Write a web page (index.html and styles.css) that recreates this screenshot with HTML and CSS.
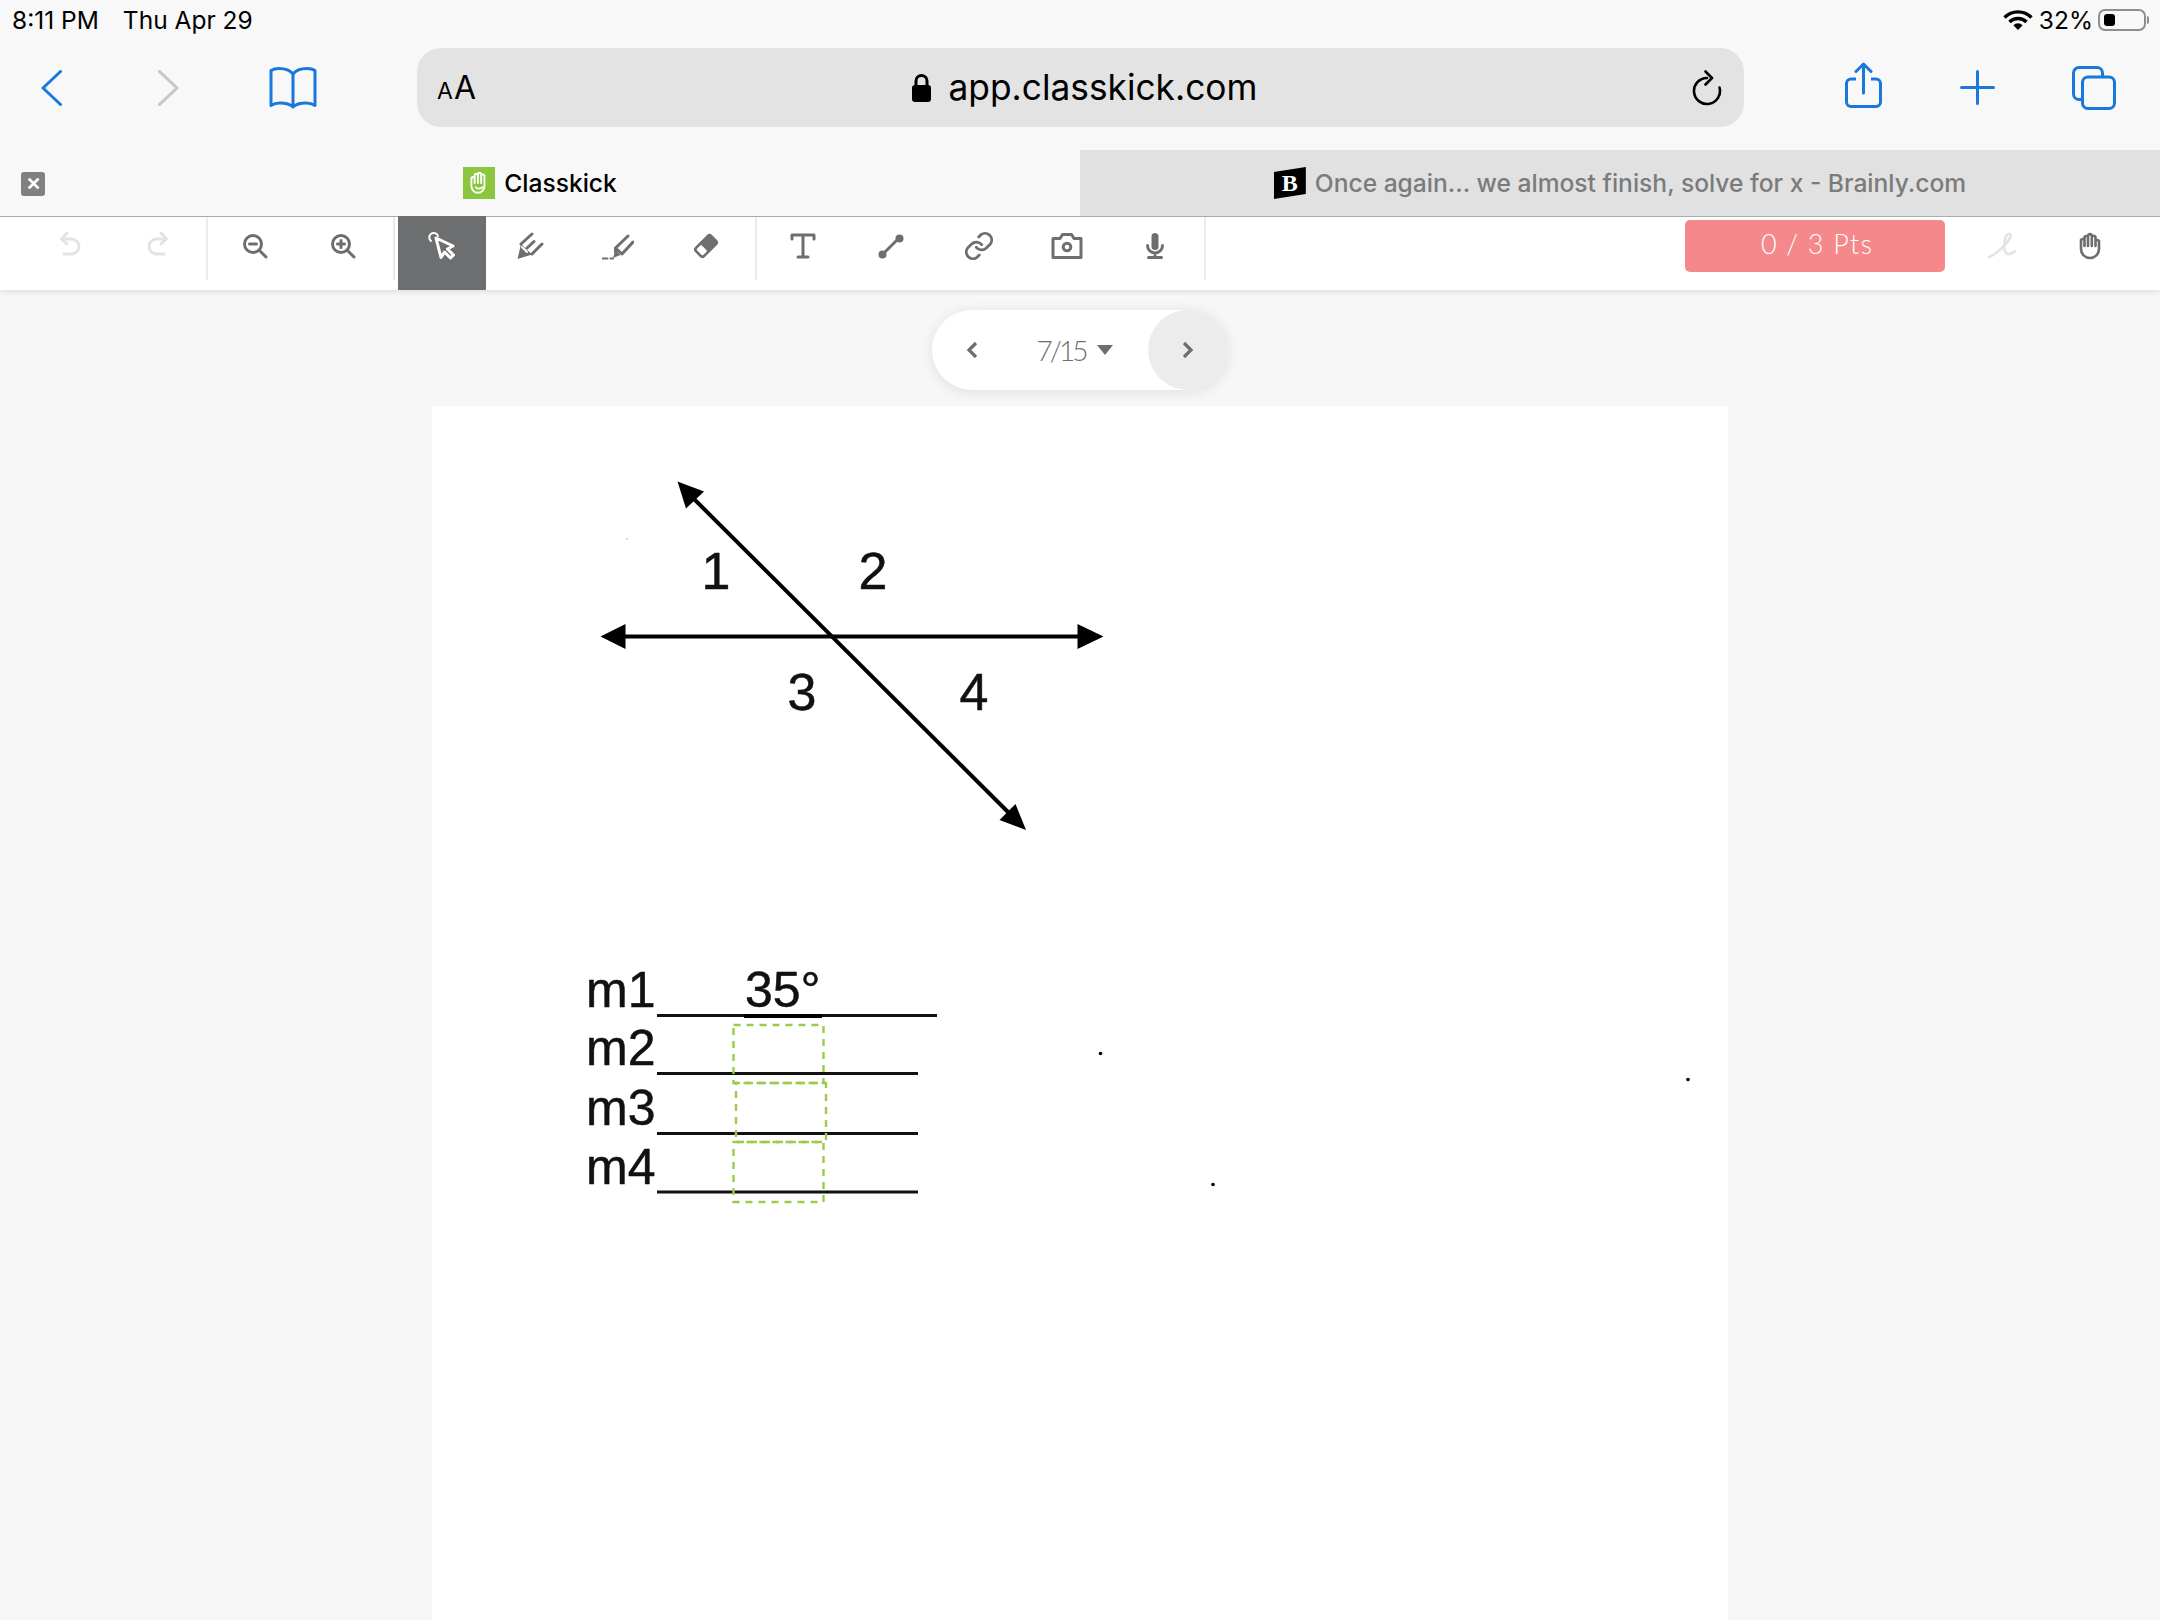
FILE: index.html
```html
<!DOCTYPE html>
<html lang="en">
<head>
    <meta charset="UTF-8">
    <meta name="viewport" content="width=device-width, initial-scale=1.0">
    <title>Classkick</title>
    <link rel="stylesheet" href="styles.css">
</head>
<body>
    <!-- iPad status bar -->
    <div class="status">
        <div class="status-left"><span>8:11 PM</span><span>Thu Apr 29</span></div>
        <div class="status-right">
            <svg width="30" height="20" viewBox="0 0 30 20" class="wifi">
                <path d="M1.500 7.500a19 19 0 0 1 27 0" fill="none" stroke="#000" stroke-width="3.400"/>
                <path d="M6.500 12a12 12 0 0 1 17 0" fill="none" stroke="#000" stroke-width="3.400"/>
                <path d="M15 20l-4.600-4.800a6.600 6.600 0 0 1 9.200 0z" fill="#000"/>
            </svg>
            <span class="battery-text">32%</span>
            <div class="battery"><div class="battery-fill"></div></div>
            <div class="battery-nub"></div>
        </div>
    </div>

    <!-- Safari address bar -->
    <div class="addressbar">
        <svg class="ab-back" width="21" height="36" viewBox="0 0 21 36"><path d="M19.500 1.500L2 18l17.500 16.500" fill="none" stroke="#1878dc" stroke-width="3" stroke-linecap="round" stroke-linejoin="round"/></svg>
        <svg class="ab-forward" width="21" height="36" viewBox="0 0 21 36"><path d="M1.500 1.500L19 18 1.500 34.500" fill="none" stroke="#c6c6c6" stroke-width="3" stroke-linecap="round" stroke-linejoin="round"/></svg>
        <svg class="ab-book" width="48" height="42" viewBox="0 0 48 42"><path d="M24 7C21 3 16 1.500 10 1.500 6 1.500 3.500 2.500 2 3.500V38.500C5 36.500 8 36 11 36c5 0 10 1 13 4 3-3 8-4 13-4 3 0 6 .5 9 2.500V3.500C44.500 2.500 42 1.500 38 1.500 32 1.500 27 3 24 7zM24 7V40" fill="none" stroke="#1878dc" stroke-width="3" stroke-linejoin="round"/></svg>

        <div class="urlbar">
            <div class="aa"><span class="aa-small">A</span><span class="aa-big">A</span></div>
            <div class="url">
                <svg width="21" height="29" viewBox="0 0 21 29"><path d="M5 13V8a5.500 5.500 0 0 1 11 0v5" fill="none" stroke="#000" stroke-width="3"/><rect x="1" y="12" width="19" height="17" rx="3" fill="#000"/></svg>
                <span>app.classkick.com</span>
            </div>
            <svg width="30" height="36" viewBox="0 0 30 36"><path d="M15 8A13 13 0 1 0 27.500 17.500" fill="none" stroke="#000" stroke-width="2.600" stroke-linecap="round"/><path d="M13.500 1.500L20 8 13.500 14.500" fill="none" stroke="#000" stroke-width="2.600" stroke-linecap="round" stroke-linejoin="round"/></svg>
        </div>

        <svg class="ab-share" width="37" height="46" viewBox="0 0 37 46"><path d="M11 17H6a4.500 4.500 0 0 0-4.500 4.500V40A4.500 4.500 0 0 0 6 44.500H31a4.500 4.500 0 0 0 4.500-4.500V21.500A4.500 4.500 0 0 0 31 17H26" fill="none" stroke="#1878dc" stroke-width="3"/><path d="M18.500 31V2M11 9.500L18.500 2 26 9.500" fill="none" stroke="#1878dc" stroke-width="3" stroke-linecap="round" stroke-linejoin="round"/></svg>
        <svg class="ab-plus" width="35" height="35" viewBox="0 0 35 35"><path d="M17.500 1.500V33.500M1.500 17.500H33.500" fill="none" stroke="#1878dc" stroke-width="3" stroke-linecap="round"/></svg>
        <svg class="ab-tabs" width="44" height="44" viewBox="0 0 44 44"><path d="M9 33.500H7A5.500 5.500 0 0 1 1.500 28V7A5.500 5.500 0 0 1 7 1.500H25A5.500 5.500 0 0 1 30.500 7V11" fill="none" stroke="#1878dc" stroke-width="3"/><rect x="10.500" y="11" width="32" height="31.500" rx="5.500" fill="none" stroke="#1878dc" stroke-width="3"/></svg>
    </div>

    <!-- Safari tabs -->
    <div class="tabs">
        <div class="tab">
            <div class="tab-close">&#10005;</div>
            <div class="favicon">
                <svg width="26" height="26" viewBox="0 0 24 24"><path d="M5 14V8a1.500 1.500 0 0 1 3 0V5a1.500 1.500 0 0 1 3 0V4a1.500 1.500 0 0 1 3 0V5.500a1.500 1.500 0 0 1 3 0V15a6 6 0 0 1-12 0zM8 8v4M11 5v7M14 4v8M9 16c1.500 1.500 4.500 1.500 6 0" fill="none" stroke="#fff" stroke-width="1.700" stroke-linecap="round"/></svg>
            </div>
            <span class="tab-title">Classkick</span>
        </div>
        <div class="tab tab-inactive">
            <div class="brainly"><span>B</span></div>
            <span class="tab-title">Once again... we almost finish, solve for x - Brainly.com</span>
        </div>
    </div>

    <!-- Classkick toolbar -->
    <div class="toolbar">
        <div class="tool tool-off"><svg width="32" height="32" viewBox="0 0 32 32"><path d="M13 3L7.500 9 13 14M8 9H17.500a7.500 7.500 0 0 1 0 15H10" class="ln"/></svg></div>
        <div class="tool tool-off"><svg width="32" height="32" viewBox="0 0 32 32"><path d="M19 3L24.500 9 19 14M24 9H14.500a7.500 7.500 0 0 0 0 15H22" class="ln"/></svg></div>
        <div class="divider divider-a"></div>
        <div class="tool"><svg width="32" height="32" viewBox="0 0 32 32"><circle cx="14" cy="14" r="8.500" class="ln"/><path d="M20.500 20.500L27 27" class="ln"/><path d="M10.500 14H17.500" class="ln"/></svg></div>
        <div class="tool"><svg width="32" height="32" viewBox="0 0 32 32"><circle cx="14" cy="14" r="8.500" class="ln"/><path d="M20.500 20.500L27 27" class="ln"/><path d="M10.500 14H17.500M14 10.500V17.500" class="ln"/></svg></div>
        <div class="divider divider-b"></div>
        <div class="tool tool-active"><svg width="32" height="32" viewBox="0 0 32 32"><path d="M10 9L27 17 21.500 20 27.500 26 24.500 29 18.500 23 15 28.500z" class="ln"/><path d="M5 12a4.500 4.500 0 1 1 7-5" class="ln-thin"/></svg></div>
        <div class="tool"><svg width="32" height="32" viewBox="0 0 32 32"><path d="M3.500 29L7 14 18 24.500z" class="fl"/><path d="M7 14L18 4M18 24L28 14M13 18L20 11.500" class="ln"/><path d="M8 17L13 22" class="ln-white"/></svg></div>
        <div class="tool"><svg width="32" height="32" viewBox="0 0 32 32"><path d="M0 28.500H5.500M8.500 28.500H11" class="ln-thin"/><path d="M11 28L13.500 20 18.500 25z" class="fl"/><path d="M13.500 18L26 6M20 24L31 12M13.500 18L13.500 22M13.500 18L20 24" class="ln"/></svg></div>
        <div class="tool"><svg width="32" height="32" viewBox="0 0 32 32"><g transform="rotate(-45 16 16)"><rect x="4" y="9" width="24" height="14" rx="3.500" class="fl"/><rect x="6.500" y="11.500" width="7" height="9" rx="1.500" fill="#fff"/></g></svg></div>
        <div class="divider divider-c"></div>
        <div class="tool"><svg width="32" height="32" viewBox="0 0 32 32"><path d="M5 9V5H27V9M16 5V27M11 27H21" class="ln"/></svg></div>
        <div class="tool"><svg width="32" height="32" viewBox="0 0 32 32"><path d="M8 24L24 8" class="ln"/><circle cx="24.500" cy="8.500" r="4" class="fl"/><circle cx="7.500" cy="24.500" r="4" class="fl"/></svg></div>
        <div class="tool"><svg width="32" height="32" viewBox="0 0 24 24"><path d="M10 13a5 5 0 0 0 7.500.5l3-3a5 5 0 0 0-7-7l-1.700 1.700M14 11a5 5 0 0 0-7.500-.5l-3 3a5 5 0 0 0 7 7l1.700-1.700" fill="none" stroke="#6d6e70" stroke-width="2.100" stroke-linecap="round"/></svg></div>
        <div class="tool"><svg width="32" height="32" viewBox="0 0 32 32"><path d="M2 8.500H9L11.500 4.500H20.500L23 8.500H30V27.500H2z" class="ln"/><circle cx="16" cy="17" r="3.800" class="ln"/></svg></div>
        <div class="tool"><svg width="32" height="32" viewBox="0 0 32 32"><rect x="12.500" y="3" width="7" height="17" rx="3.500" class="fl"/><path d="M8.500 15.500a7.500 7.500 0 0 0 15 0M16 23V27M9.500 27.500H22.500" class="ln"/></svg></div>
        <div class="divider divider-d"></div>

        <div class="toolbar-right">
            <div class="points">0 / 3 Pts</div>
            <div class="tool tool-off"><svg width="32" height="32" viewBox="0 0 32 32"><path d="M3 27C9 25 20 15 24 8 26 4 22 2 20 6 18 11 17 19 20 23 21 25 26 24 29 21" fill="none" stroke="#e3e3e3" stroke-width="2.600" stroke-linecap="round"/></svg></div>
            <div class="tool"><svg width="32" height="32" viewBox="0 0 32 32"><path d="M7 18V10a2 2 0 0 1 3.500 0V7a2 2 0 0 1 3.500 0V5.500a2 2 0 0 1 3.800 0V7a2 2 0 0 1 3.700 0V11a2 2 0 0 1 3.500 0V19a9 9 0 0 1-18 0zM10.500 9.500V16M14 7V16M17.800 6V16M21.500 7V16" class="ln-mid"/></svg></div>
        </div>
    </div>

    <main class="workspace">
        <div class="pager">
            <div class="pager-btn"><svg width="14" height="20" viewBox="0 0 14 20"><path d="M11 3L4 10l7 7" fill="none" stroke="#6d6e70" stroke-width="3.200"/></svg></div>
            <div class="pager-count"><span class="pager-text">7/15</span><i class="caret"></i></div>
            <div class="pager-btn pager-next"><svg width="14" height="20" viewBox="0 0 14 20"><path d="M3 3l7 7-7 7" fill="none" stroke="#6d6e70" stroke-width="3.200"/></svg></div>
        </div>

        <!-- the worksheet, coordinates are screen pixels -->
        <div class="sheet">
            <svg class="sheet-art" width="1296" height="1214" viewBox="432 406 1296 1214">
                <path d="M612 636.500H1090" class="art-line"/>
                <path d="M690 495L1012 816" class="art-line"/>
                <path d="M600.500 636.500L625.500 624V649z"/>
                <path d="M1103.500 636.500L1077.500 624V649z"/>
                <path d="M677.500 481.500L704 491.500 686 508.500z"/>
                <path d="M1026 830L1015.500 804 999.500 820z"/>
                <text x="716" y="589" class="art-num">1</text>
                <text x="873" y="589" class="art-num">2</text>
                <text x="802" y="710" class="art-num">3</text>
                <text x="974" y="710" class="art-num">4</text>

                <text x="586" y="1007" class="art-label">m1</text>
                <text x="586" y="1065" class="art-label">m2</text>
                <text x="586" y="1125" class="art-label">m3</text>
                <text x="586" y="1184" class="art-label">m4</text>
                <path d="M657 1015.500H937M657 1073.500H918M657 1133.500H918M657 1192H918" class="art-rule"/>

                <text x="745" y="1007" class="art-label art-answer">35°</text>
                <path d="M744 1016H822" class="art-rule art-thick"/>

                <rect x="733.500" y="1025" width="90" height="58" class="art-box"/>
                <rect x="736" y="1083" width="90" height="59" class="art-box art-box-mid"/>
                <rect x="733.500" y="1142" width="90" height="60" class="art-box"/>

                <circle cx="1100.500" cy="1053.500" r="1.800"/>
                <circle cx="1688" cy="1079.500" r="1.800"/>
                <circle cx="1213" cy="1184.500" r="1.800"/>
                <circle cx="627" cy="539" r="1" fill="#ccc"/>
            </svg>
        </div>
    </main>
</body>
</html>
```

FILE: styles.css
```css
body {
    margin: 0;
    height: 1620px;
    overflow: hidden;
    background: #f7f7f7;
    font-family: Inter, "Liberation Sans", sans-serif;
    color: #000;
}
svg {
    display: block;
}

/* status bar */
.status {
    display: flex;
    justify-content: space-between;
    align-items: center;
    height: 40px;
    padding: 0 11px 8px 12px;
    background: #f8f8f8;
    font-size: 24.5px;
}
.status-left {
    display: flex;
    gap: 24px;
}
.status-right {
    display: flex;
    align-items: center;
}
.wifi {
    margin-right: 6px;
}
.battery {
    width: 48px;
    height: 22px;
    box-sizing: border-box;
    margin-left: 5px;
    padding: 3px 4px;
    border: 2px solid #8e8e8e;
    border-radius: 7px;
}
.battery-fill {
    width: 11px;
    height: 100%;
    background: #000;
    border-radius: 3px;
}
.battery-nub {
    width: 2px;
    height: 8px;
    margin-left: 1px;
    background: #8e8e8e;
    border-radius: 0 2px 2px 0;
}

/* address bar */
.addressbar {
    display: flex;
    align-items: center;
    height: 79px;
    padding: 0 0 23px 41px;
    background: #f8f8f8;
}
.ab-forward { margin-left: 96px; }
.ab-book { margin-left: 90px; }
.ab-share { margin-left: 101px; margin-top: -6px; }
.ab-plus { margin-left: 78px; }
.ab-tabs { margin-left: 77px; }
.urlbar {
    display: flex;
    justify-content: space-between;
    align-items: center;
    width: 1327px;
    height: 79px;
    box-sizing: border-box;
    margin-left: 100px;
    padding: 0 22px 0 20px;
    background: #e3e3e3;
    border-radius: 24px;
}
.aa {
    display: flex;
    align-items: baseline;
    gap: 1px;
}
.aa-small { font-size: 23px; }
.aa-big { font-size: 32px; }
.url {
    display: flex;
    align-items: center;
    gap: 17px;
    font-size: 35.3px;
}

/* tabs */
.tabs {
    display: flex;
    height: 66px;
    background: #f8f8f8;
    border-bottom: 1px solid #aaa;
}
.tab {
    position: relative;
    flex: 1;
    display: flex;
    justify-content: center;
    align-items: center;
    gap: 9px;
    font-size: 24.6px;
    font-weight: 500;
}
.tab-inactive {
    background: #e1e1e1;
    color: #7b7b7b;
}
.tab-close {
    position: absolute;
    left: 21px;
    top: 22px;
    width: 24px;
    height: 24px;
    background: #808080;
    border-radius: 3px;
    color: #fff;
    font-size: 18px;
    font-weight: 700;
    line-height: 24px;
    text-align: center;
}
.favicon {
    display: flex;
    justify-content: center;
    align-items: center;
    width: 32px;
    height: 32px;
    background: #8cc63f;
}
.brainly {
    display: flex;
    justify-content: center;
    align-items: center;
    width: 32px;
    height: 32px;
    background: #000;
    clip-path: polygon(0 16%, 100% 0, 100% 84%, 0 100%);
    color: #fff;
    font-family: "Liberation Serif", serif;
    font-size: 24px;
    font-weight: 700;
}

/* toolbar */
.toolbar {
    position: relative;
    display: flex;
    align-items: flex-start;
    height: 73px;
    padding: 0 26px;
    background: #fff;
    box-shadow: 0 3px 4px rgba(0, 0, 0, 0.08);
}
.tool {
    display: flex;
    justify-content: center;
    width: 88px;
    height: 60px;
    padding-top: 13px;
}
.divider {
    width: 2px;
    height: 63px;
    background: #ececec;
}
.divider-a { margin: 0 3px 0 4px; }
.divider-b { margin: 0 3px 0 6px; }
.divider-c { margin: 0 2px 0 5px; }
.divider-d { margin: 0 0 0 5px; }
.tool-active {
    height: 61px;
    margin-top: -1px;
    background: #6d6e70;
}
.ln, .ln-thin, .ln-mid, .ln-white {
    fill: none;
    stroke: #6d6e70;
    stroke-width: 3;
    stroke-linecap: round;
    stroke-linejoin: round;
}
.ln-thin { stroke-width: 2; }
.ln-mid { stroke-width: 2.6; }
.ln-white { stroke: #fff; stroke-width: 2; }
.fl { fill: #6d6e70; }
.tool-off .ln { stroke: #e3e3e3; }
.tool-active .ln, .tool-active .ln-thin { stroke: #fff; }
.toolbar-right {
    display: flex;
    margin-left: auto;
}
.points {
    width: 260px;
    height: 52px;
    margin: 3px 13px 0 0;
    background: #f4888b;
    border-radius: 5px;
    color: #fff;
    font-family: Lato, sans-serif;
    font-size: 27px;
    font-weight: 300;
    line-height: 48px;
    letter-spacing: 1.2px;
    text-align: center;
    text-indent: 4px;
}

/* pager and sheet */
.workspace {
    display: flex;
    flex-direction: column;
    align-items: center;
    padding-top: 20px;
}
.pager {
    display: flex;
    width: 296px;
    height: 80px;
    margin-bottom: 16px;
    background: #fff;
    border-radius: 40px;
    box-shadow: 0 2px 14px rgba(0, 0, 0, 0.1);
}
.pager-btn {
    display: flex;
    justify-content: center;
    align-items: center;
    width: 80px;
    height: 80px;
    border-radius: 40px;
}
.pager-next {
    background: #ececec;
}
.pager-count {
    flex: 1;
    display: flex;
    justify-content: center;
    align-items: center;
    gap: 12px;
    padding-right: 10px;
    color: #6d6e70;
    font-family: Lato, sans-serif;
    font-size: 28px;
    font-weight: 300;
}
.pager-text {
    letter-spacing: -3px;
}
.caret {
    width: 0;
    height: 0;
    border-top: 10px solid #6d6e70;
    border-left: 8px solid transparent;
    border-right: 8px solid transparent;
}
.sheet {
    width: 1296px;
    height: 1214px;
    background: #fff;
}
.art-line {
    fill: none;
    stroke: #000;
    stroke-width: 4;
}
.art-num, .art-label {
    font-family: "Liberation Sans", sans-serif;
    font-size: 52px;
    fill: #111;
    stroke: #111;
    stroke-width: 0.5;
}
.art-num {
    text-anchor: middle;
}
.art-label {
    font-size: 50px;
}
.art-rule {
    fill: none;
    stroke: #111;
    stroke-width: 3;
}
.art-thick {
    stroke: #000;
    stroke-width: 4;
}
.art-box {
    fill: none;
    stroke: #9ccb4a;
    stroke-width: 2.4;
    stroke-dasharray: 7 6;
}
.art-box-mid {
    stroke-dashoffset: 3;
}
```
